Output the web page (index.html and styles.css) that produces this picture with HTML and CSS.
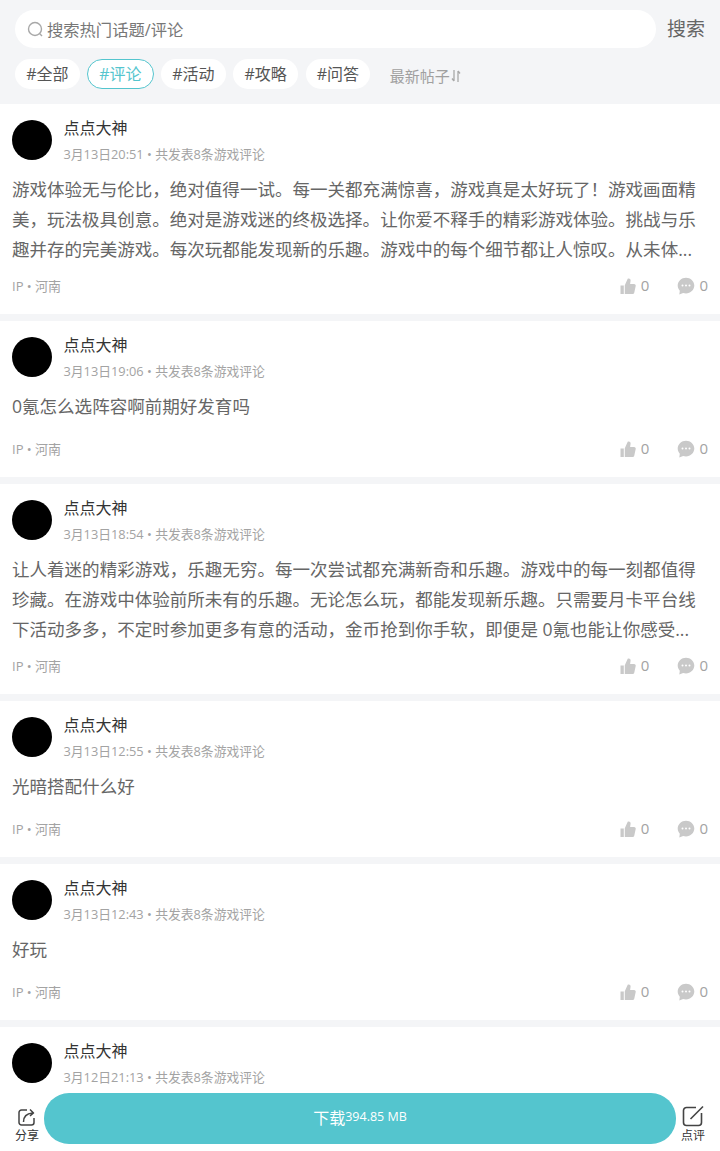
FILE: index.html
```html
<!DOCTYPE html>
<html lang="zh-CN">
<head>
<meta charset="utf-8">
<title>点点大神</title>
<link rel="stylesheet" href="styles.css">
</head>
<body>
<svg class="defs" width="0" height="0" aria-hidden="true">
  <symbol id="thumb" viewBox="0 0 18 18"><path fill="#c9c9c9" d="M1.500 8.500h3.300V17H1.500zM5.800 8.300 8.700 1.800c1.500-.8 3 .1 2.900 1.800l-.5 3.300h3.900c1.300 0 2 1 1.700 2.200l-1.400 6.400c-.2 1-1 1.500-2 1.500H5.800z"/></symbol>
  <symbol id="chat" viewBox="0 0 18 18"><path fill="#c9c9c9" d="M9 .8c4.500 0 8.300 3.400 8.300 7.800S13.500 16.400 9 16.400c-1 0-2-.2-2.900-.5L2.300 17.400l.5-3.600C1.500 12.400.7 10.700.7 8.600.7 4.200 4.500.8 9 .8z"/><circle cx="5.500" cy="8.600" r="1" fill="#fff"/><circle cx="9" cy="8.600" r="1" fill="#fff"/><circle cx="12.500" cy="8.600" r="1" fill="#fff"/></symbol>
</svg>
<header class="top">
  <div class="search-row">
    <div class="search-box">
      <svg class="search-icon" width="17" height="17" viewBox="0 0 17 17"><circle cx="8" cy="8" r="6.500" fill="none" stroke="#a8a8a8" stroke-width="1.400"/><path d="M12.800 12.800 15 15" stroke="#a8a8a8" stroke-width="1.400" fill="none"/></svg>
      <span class="search-text">搜索热门话题/评论</span>
    </div>
    <span class="search-btn">搜索</span>
  </div>
  <div class="tags">
    <span class="tag">#全部</span>
    <span class="tag tag-on">#评论</span>
    <span class="tag">#活动</span>
    <span class="tag">#攻略</span>
    <span class="tag">#问答</span>
    <span class="sort">最新帖子<svg class="sort-icon" width="10" height="14" viewBox="0 0 10 14" fill="none" stroke="#a8a8a8" stroke-width="1.300"><path d="M3 1v11M3 12 1 9.500M7 13V2M7 2l2 2.500"/></svg></span>
  </div>
</header>
<main>
  <article class="card">
    <div class="head"><div class="avatar"></div><div class="who"><div class="name">点点大神</div><div class="meta">3月13日20:51 • 共发表8条游戏评论</div></div></div>
    <p class="body clamp">游戏体验无与伦比，绝对值得一试。每一关都充满惊喜，游戏真是太好玩了！游戏画面精美，玩法极具创意。绝对是游戏迷的终极选择。让你爱不释手的精彩游戏体验。挑战与乐趣并存的完美游戏。每次玩都能发现新的乐趣。游戏中的每个细节都让人惊叹。从未体...</p>
    <div class="foot"><span class="ip">IP • 河南</span><div class="stats"><span class="stat"><svg class="ico"><use href="#thumb"/></svg><span class="num">0</span></span><span class="stat"><svg class="ico"><use href="#chat"/></svg><span class="num">0</span></span></div></div>
  </article>
  <article class="card">
    <div class="head"><div class="avatar"></div><div class="who"><div class="name">点点大神</div><div class="meta">3月13日19:06 • 共发表8条游戏评论</div></div></div>
    <p class="body">0氪怎么选阵容啊前期好发育吗</p>
    <div class="foot"><span class="ip">IP • 河南</span><div class="stats"><span class="stat"><svg class="ico"><use href="#thumb"/></svg><span class="num">0</span></span><span class="stat"><svg class="ico"><use href="#chat"/></svg><span class="num">0</span></span></div></div>
  </article>
  <article class="card">
    <div class="head"><div class="avatar"></div><div class="who"><div class="name">点点大神</div><div class="meta">3月13日18:54 • 共发表8条游戏评论</div></div></div>
    <p class="body clamp">让人着迷的精彩游戏，乐趣无穷。每一次尝试都充满新奇和乐趣。游戏中的每一刻都值得珍藏。在游戏中体验前所未有的乐趣。无论怎么玩，都能发现新乐趣。只需要月卡平台线下活动多多，不定时参加更多有意的活动，金币抢到你手软，即便是 0氪也能让你感受...</p>
    <div class="foot"><span class="ip">IP • 河南</span><div class="stats"><span class="stat"><svg class="ico"><use href="#thumb"/></svg><span class="num">0</span></span><span class="stat"><svg class="ico"><use href="#chat"/></svg><span class="num">0</span></span></div></div>
  </article>
  <article class="card">
    <div class="head"><div class="avatar"></div><div class="who"><div class="name">点点大神</div><div class="meta">3月13日12:55 • 共发表8条游戏评论</div></div></div>
    <p class="body">光暗搭配什么好</p>
    <div class="foot"><span class="ip">IP • 河南</span><div class="stats"><span class="stat"><svg class="ico"><use href="#thumb"/></svg><span class="num">0</span></span><span class="stat"><svg class="ico"><use href="#chat"/></svg><span class="num">0</span></span></div></div>
  </article>
  <article class="card">
    <div class="head"><div class="avatar"></div><div class="who"><div class="name">点点大神</div><div class="meta">3月13日12:43 • 共发表8条游戏评论</div></div></div>
    <p class="body">好玩</p>
    <div class="foot"><span class="ip">IP • 河南</span><div class="stats"><span class="stat"><svg class="ico"><use href="#thumb"/></svg><span class="num">0</span></span><span class="stat"><svg class="ico"><use href="#chat"/></svg><span class="num">0</span></span></div></div>
  </article>
  <article class="card card-last">
    <div class="head"><div class="avatar"></div><div class="who"><div class="name">点点大神</div><div class="meta">3月12日21:13 • 共发表8条游戏评论</div></div></div>
  </article>
</main>
<footer class="bar">
  <div class="side side-left">
    <svg width="18" height="18" viewBox="0 0 18 18" fill="none" stroke="#444" stroke-width="1.500"><path d="M9 2H3.500A2.500 2.500 0 0 0 1 4.500v10A2.500 2.500 0 0 0 3.500 17h10a2.500 2.500 0 0 0 2.500-2.500V10"/><path d="M5.500 14c0-5 3-8.500 9-9M12 1.500 15.500 5 12 8" stroke-linejoin="round"/></svg>
    <span>分享</span>
  </div>
  <div class="download"><span class="dl-main">下载</span><span class="dl-size">394.85 MB</span></div>
  <div class="side side-right">
    <svg width="22" height="22" viewBox="0 0 22 22" fill="none" stroke="#444" stroke-width="1.600"><path d="M14 2.500H4.500a3 3 0 0 0-3 3v12a3 3 0 0 0 3 3h12a3 3 0 0 0 3-3V8"/><path d="M8.500 14 21 1.500"/></svg>
    <span>点评</span>
  </div>
</footer>
</body>
</html>
```

FILE: styles.css
```css
* { box-sizing: border-box; }
html, body { margin: 0; padding: 0; }
body {
  width: 720px;
  height: 1151px;
  overflow: hidden;
  background: #f4f5f7;
  font-family: "Open Sans", "Noto Sans CJK SC", sans-serif;
  color: #666;
  position: relative;
}
.defs { position: absolute; }
.top { height: 104px; padding: 10px 15px 0; background: #f4f5f7; }
.search-row { display: flex; align-items: center; height: 38px; }
.search-box {
  width: 641px;
  height: 38px;
  border-radius: 19px;
  background: #fff;
  display: flex;
  align-items: center;
  padding-left: 12px;
  gap: 3px;
}
.search-text { font-size: 16.300px; color: #777; line-height: 38px; padding-top: 1px; }
.search-btn { margin-left: 11px; font-size: 19px; color: #666; line-height: 38px; }
.tags { display: flex; align-items: center; margin-top: 11px; height: 30px; }
.tag {
  height: 30px;
  line-height: 31px;
  padding: 0 11.200px;
  border-radius: 15px;
  background: #fff;
  font-size: 16px;
  color: #555;
  margin-right: 7.500px;
}
.tag-on {
  color: #54c5ce;
  border: 1px solid #54c5ce;
  padding: 0 11px;
  line-height: 29px;
}
.sort {
  display: flex;
  align-items: center;
  margin-left: 12px;
  padding-top: 3px;
  font-size: 15px;
  color: #a0a0a0;
  line-height: 34px;
}
.sort-icon { margin-left: 1px; }
.card { background: #fff; padding: 16px 12px 18px; margin-bottom: 7px; }
.card-last { height: 130px; }
.head { display: flex; height: 40px; }
.avatar { width: 40px; height: 40px; border-radius: 50%; background: #000; flex: none; }
.who { margin-left: 11.500px; margin-top: -4px; }
.name { font-size: 16px; line-height: 24px; color: #333; }
.meta { font-size: 12.800px; line-height: 20px; margin-top: 4px; color: #a3a3a3; }
.body { margin: 14px 0 18px; font-size: 17.550px; line-height: 30px; color: #666; }
.clamp {
  display: -webkit-box;
  -webkit-box-orient: vertical;
  -webkit-line-clamp: 3;
  overflow: hidden;
  margin-bottom: 12px;
}
.foot {
  display: flex;
  justify-content: space-between;
  align-items: center;
  height: 20px;
  font-size: 13px;
  color: #a3a3a3;
}
.ip { margin-top: -2px; }
.stats { display: flex; gap: 28px; }
.stat { display: flex; align-items: center; gap: 4px; font-size: 15px; line-height: 20px; color: #a3a3a3; }
.num { margin-top: -2px; }
.ico { width: 18px; height: 18px; }
.bar {
  position: absolute;
  left: 0;
  right: 0;
  bottom: 0;
  height: 58px;
  background: #fff;
  display: flex;
  align-items: flex-start;
}
.side {
  width: 44px;
  flex: none;
  display: flex;
  flex-direction: column;
  align-items: center;
  font-size: 12px;
  line-height: 16px;
  color: #333;
}
.side-left { padding: 15px 0 0 10px; }
.side-right { padding: 12px 10px 0 0; }
.side-right span { margin-top: 1px; }
.side-left span { margin-top: 2px; }
.download {
  width: 632px;
  height: 51px;
  padding: 0 0 4px 0;
  border-radius: 25px;
  background: #54c5ce;
  color: #fff;
  display: flex;
  align-items: center;
  justify-content: center;
}
.dl-main { font-size: 16px; }
.dl-size { font-size: 12.500px; }
```
